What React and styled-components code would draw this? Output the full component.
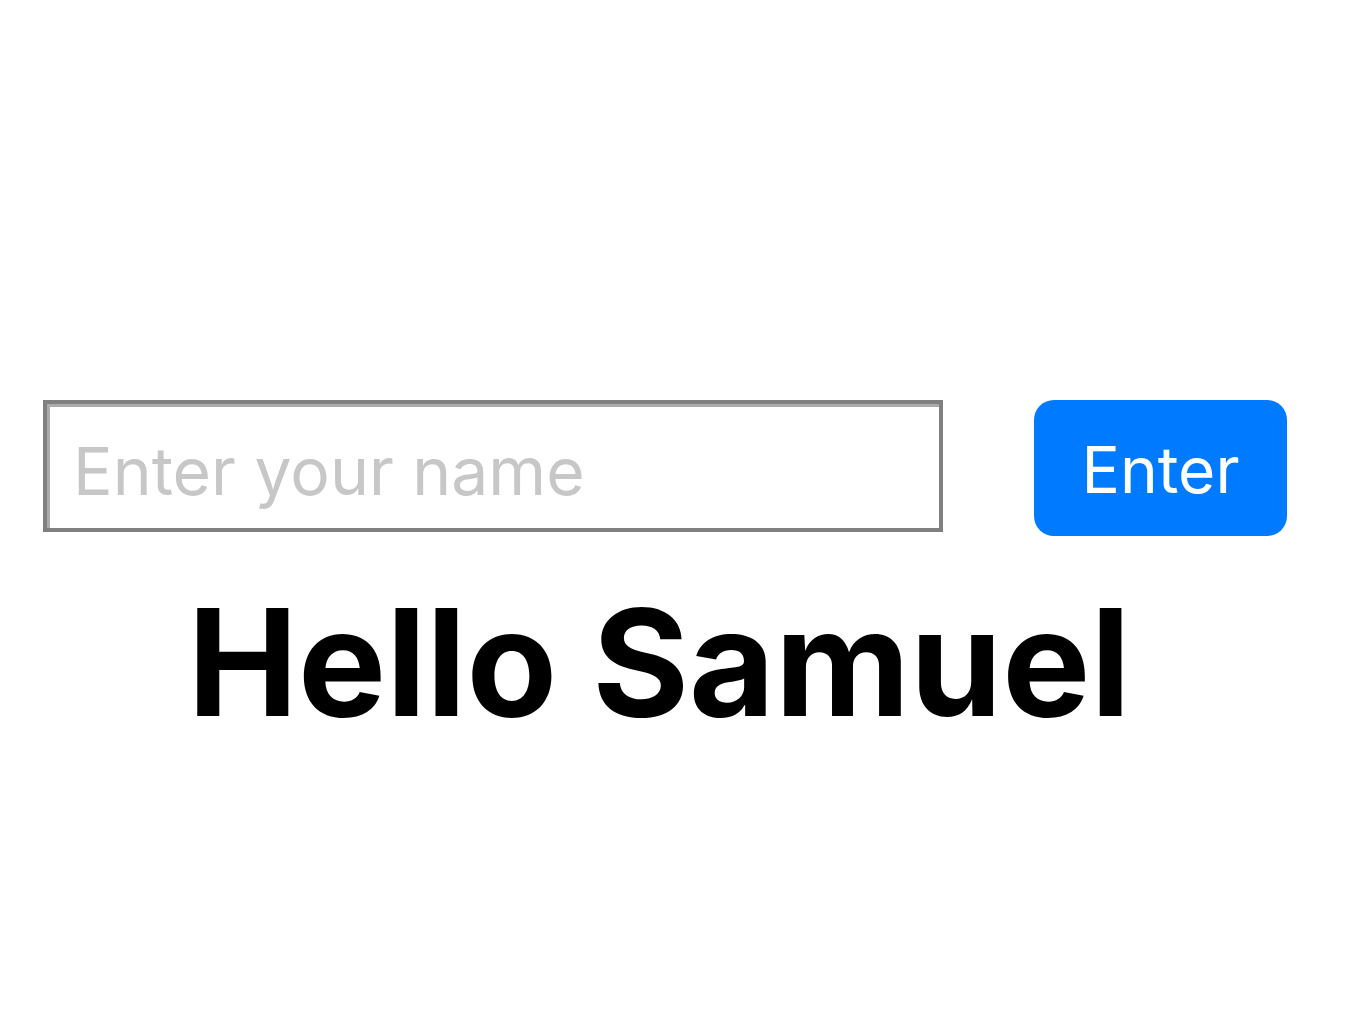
import React, { useState } from "react"
import styled, { createGlobalStyle } from "styled-components"

const GlobalStyle = createGlobalStyle`
  html, body {
    margin: 0;
    padding: 0;
    background: #fff;
  }
  body {
    font-family: Inter, "Noto Sans", "Liberation Sans", sans-serif;
  }
`

const Page = styled.main`
  width: 1352px;
  height: 1010px;
  display: flex;
  flex-direction: column;
  padding: 400px 0 0 43px;
  box-sizing: border-box;
`

const Row = styled.div`
  display: flex;
  align-items: flex-start;
  gap: 91px;
`

const NameInput = styled.input`
  width: 900px;
  height: 132px;
  box-sizing: border-box;
  border: 4px solid #808080;
  box-shadow: inset 3px 3px 0 #ababab;
  padding: 10px 0 0 26px;
  font-family: Inter, "Noto Sans", sans-serif;
  font-size: 66px;
  color: #000;
  outline: none;
  background: #fff;

  &::placeholder {
    color: #c7c7c7;
  }
`

const EnterButton = styled.button`
  width: 253px;
  height: 136px;
  border: none;
  border-radius: 20px;
  background: #007aff;
  color: #fff;
  font-family: Inter, "Noto Sans", sans-serif;
  font-size: 64px;
  padding: 2px 0 0;
  cursor: pointer;
`

const Greeting = styled.h1`
  margin: 38px 0 0;
  width: 1232px;
  text-align: center;
  font-family: Inter, "Noto Sans", sans-serif;
  font-weight: 700;
  font-size: 148px;
  line-height: 1.2;
  color: #000;
`

const App = () => {
  const [value, setValue] = useState("")
  return (
    <>
      <GlobalStyle />
      <Page>
        <Row>
          <NameInput
            placeholder="Enter your name"
            value={value}
            onChange={(e) => setValue(e.target.value)}
          />
          <EnterButton>Enter</EnterButton>
        </Row>
        <Greeting>Hello Samuel</Greeting>
      </Page>
    </>
  )
}

export default App
